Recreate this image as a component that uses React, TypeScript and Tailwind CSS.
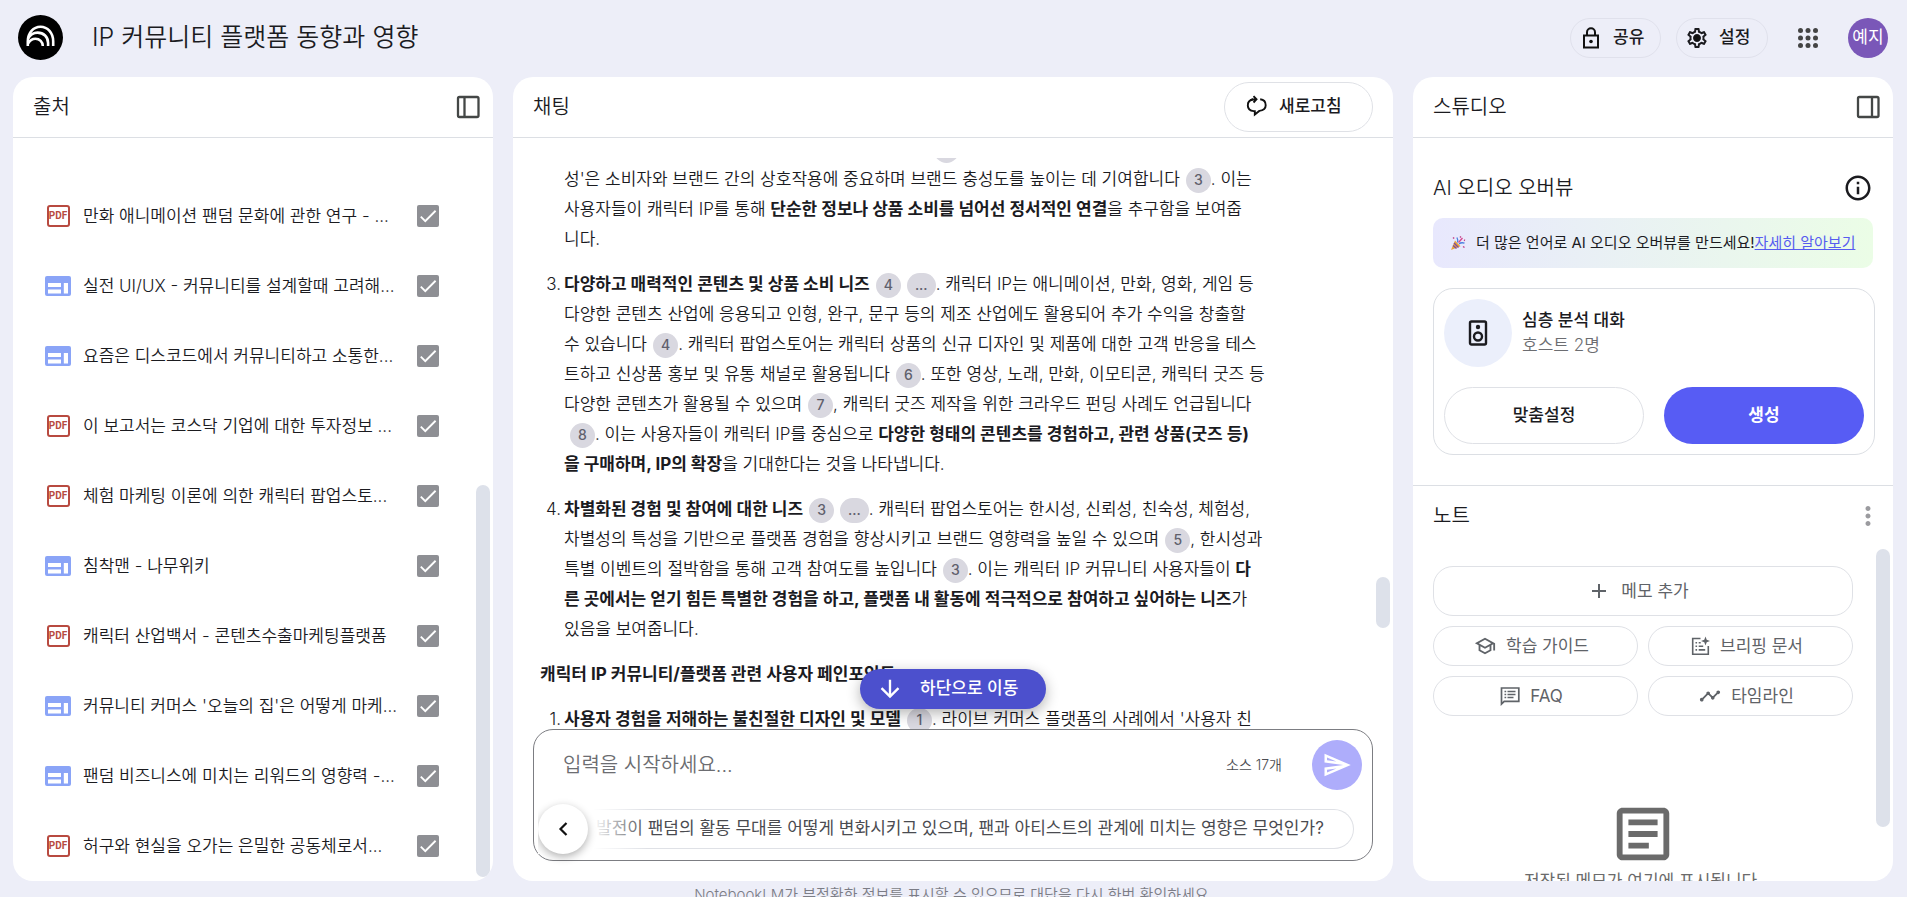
import React from 'react';
import {
  MdAdd,
  MdArrowDownward,
  MdCheck,
  MdMoreVert,
  MdOutlineArticle,
  MdOutlineInfo,
  MdOutlineSchool,
  MdOutlineSend,
  MdOutlineSettings,
  MdTimeline,
} from 'react-icons/md';

type SourceKind = 'pdf' | 'web';

interface Source {
  kind: SourceKind;
  title: string;
}

const sources: Source[] = [
  { kind: 'pdf', title: '만화 애니메이션 팬덤 문화에 관한 연구 - ...' },
  { kind: 'web', title: '실전 UI/UX - 커뮤니티를 설계할때 고려해...' },
  { kind: 'web', title: '요즘은 디스코드에서 커뮤니티하고 소통한...' },
  { kind: 'pdf', title: '이 보고서는 코스닥 기업에 대한 투자정보 ...' },
  { kind: 'pdf', title: '체험 마케팅 이론에 의한 캐릭터 팝업스토...' },
  { kind: 'web', title: '침착맨 - 나무위키' },
  { kind: 'pdf', title: '캐릭터 산업백서 - 콘텐츠수출마케팅플랫폼' },
  { kind: 'web', title: "커뮤니티 커머스 '오늘의 집'은 어떻게 마케..." },
  { kind: 'web', title: '팬덤 비즈니스에 미치는 리워드의 영향력 -...' },
  { kind: 'pdf', title: '허구와 현실을 오가는 은밀한 공동체로서...' },
];

const Logo = () => (
  <svg viewBox="0 0 45 45" className="size-[45px] shrink-0" aria-hidden="true">
    <circle cx="22.5" cy="22.5" r="22.5" fill="#000" />
    <g fill="none" stroke="#fff" strokeWidth="2.6">
      <path d="M9.8 31v-4.5C9.8 18 15.4 11.8 22.5 11.8S35.2 18 35.2 26.500V31" />
      <path d="M10 23.500c2.300-4 5.800-5.900 9.600-5.900 6 0 10.500 4.400 10.500 10.400v3" />
      <path d="M10.200 28.200c1.800-2.900 4.200-4.400 7.200-4.400 4.300 0 7.400 3.200 7.400 7.200" />
    </g>
  </svg>
);

const LockIcon = () => (
  <svg viewBox="0 0 24 24" className="size-6" fill="none" stroke="#111" strokeWidth="2" aria-hidden="true">
    <rect x="5" y="9.500" width="14" height="12" />
    <path d="M8 9.500V6.200a4 4 0 0 1 8 0v3.300" />
    <circle cx="12" cy="15.500" r="1.800" fill="#111" stroke="none" />
  </svg>
);

const SettingsIcon = () => (
  <span className="relative flex size-6 items-center justify-center">
    <MdOutlineSettings className="size-6" />
    <span className="absolute size-1.5 rounded-full bg-[#111]" />
  </span>
);

const AppsIcon = () => (
  <svg viewBox="0 0 20 20" className="size-5" fill="#444" aria-hidden="true">
    {[2.5, 10, 17.5].map((cy) => [2.5, 10, 17.5].map((cx) => <circle key={`${cx}-${cy}`} cx={cx} cy={cy} r="2.500" />))}
  </svg>
);

const PanelIcon = ({ side }: { side: 'left' | 'right' }) => (
  <svg viewBox="0 0 24 24" className="size-6" fill="none" stroke="#444746" strokeWidth="2.300" aria-hidden="true">
    <rect x="2" y="2" width="20.500" height="20" rx="1.500" />
    <path d={side === 'left' ? 'M8.500 2v20' : 'M16 2v20'} />
  </svg>
);

const RefreshIcon = () => (
  <svg viewBox="0 0 24 24" className="size-6" fill="none" stroke="#111" strokeWidth="1.900" aria-hidden="true">
    <path d="M8 4.300C5 5 2.800 7.200 2.800 10.200c0 3.300 2.500 5.600 6 5.900h1v3.500l4.500-3.700c3.800-.5 6.400-2.600 6.400-5.700 0-3.300-2.400-5.500-5.500-5.900" />
    <path d="M5.500 5.400c1.300-.8 2.700-1.100 4-1.100h1.500M8.500 1.200l3 3.100-3 3.200" />
  </svg>
);

const WebIcon = () => (
  <svg viewBox="0 0 26 20" className="h-5 w-[26px]" aria-hidden="true">
    <rect width="26" height="20" rx="2" fill="#8aa4f7" />
    <path d="M3 7h13v4H3zM3 13.500h13v4H3zM18.800 7H23v10.500h-4.200z" fill="#fff" />
  </svg>
);

const PdfIcon = () => (
  <span className="flex h-[22px] w-[23px] items-center justify-center rounded-[3px] border-2 border-[#b84a40] font-[Roboto] text-[10px] leading-none font-bold text-[#b84a40]">
    PDF
  </span>
);

const SpeakerIcon = () => (
  <svg viewBox="0 0 20 26" className="h-[26px] w-5" fill="none" stroke="#1b1b1f" strokeWidth="2.400" aria-hidden="true">
    <rect x="2" y="1.500" width="16" height="23" rx="1.500" />
    <circle cx="10" cy="16.500" r="4" />
    <circle cx="10" cy="7" r="2.200" fill="#1b1b1f" stroke="none" />
  </svg>
);

const BriefingIcon = () => (
  <svg viewBox="0 0 20 20" className="size-5" fill="none" stroke="#5f6368" strokeWidth="1.600" aria-hidden="true">
    <path d="M10.500 2.500H2.700v15.800h15.600V10" />
    <path d="M5.500 6.800h1.600M5.500 10.300h1.600M5.500 13.900h1.600M8.700 6.800h2M8.700 10.300h4.500M8.700 13.900h6.500" />
    <path d="M15.500.5l1.200 3.300L20 5l-3.300 1.200-1.200 3.300-1.200-3.300L11 5l3.300-1.200z" fill="#5f6368" stroke="none" />
  </svg>
);

const FaqIcon = () => (
  <svg viewBox="0 0 20 20" className="size-5" fill="none" stroke="#5f6368" strokeWidth="1.700" aria-hidden="true">
    <path d="M1.500 18V2h17.300v13.300H4.200z" />
    <path d="M4.500 5.500h1.700M4.500 8.500h1.700M4.500 11.500h1.700M7.500 5.500h8M7.500 8.500h8M7.500 11.500h6" />
  </svg>
);

const PartyIcon = () => (
  <svg viewBox="0 0 16 16" className="size-4 shrink-0" aria-hidden="true">
    <path d="M1 15L5 5.500l5.500 5.700z" fill="#e8a33d" />
    <path d="M3 10.500l3.500 3M4 8l4.500 4.500" stroke="#7b4a9e" strokeWidth="1.300" />
    <path d="M7.500 7.500c.5-2 .3-3.500-.6-5M9 9c1.500-1.300 3.500-1.500 5.500-.8" stroke="#4a7fe0" strokeWidth="1.300" fill="none" />
    <path d="M8.500 7.500L12.500 3" stroke="#d8478f" strokeWidth="1.400" />
    <path d="M10 1.500l1 1M14 5l1 .5M3 2.500l1.200 1M13 11.500l1.500 1" stroke="#c0418b" strokeWidth="1.500" />
  </svg>
);

const Chip = ({ children }: { children: React.ReactNode }) => (
  <button className="ml-1.5 inline-flex h-[25px] min-w-[25px] items-center justify-center rounded-full bg-[#d9d8e0] px-2 align-middle text-sm leading-none font-medium text-[#60606c]">
    {children}
  </button>
);

const PanelHeader = ({ title, children }: { title: string; children?: React.ReactNode }) => (
  <div className="flex h-[61px] shrink-0 items-center justify-between border-b border-[#dcdfe4] pl-5">
    <h2 className="text-xl leading-7">{title}</h2>
    {children}
  </div>
);

const SourcesPanel = () => (
  <section className="flex w-[480px] shrink-0 flex-col overflow-hidden rounded-[20px] bg-white">
    <PanelHeader title="출처">
      <button className="mr-[13px]" aria-label="출처 패널 접기">
        <PanelIcon side="left" />
      </button>
    </PanelHeader>
    <div className="flex min-h-0 flex-1 pr-[3px]">
      <ul className="flex min-w-0 flex-1 flex-col justify-end pr-[37px] pl-8">
        {sources.map((source, i) => (
          <li key={source.title} className="flex h-[70px] shrink-0 items-center">
            <span className="flex w-[26px] justify-center">{source.kind === 'pdf' ? <PdfIcon /> : <WebIcon />}</span>
            <label htmlFor={`source-${i}`} className="ml-3 min-w-0 flex-1 overflow-hidden pt-px whitespace-nowrap">
              {source.title}
            </label>
            <span className="relative size-[22px]">
              <input
                id={`source-${i}`}
                type="checkbox"
                defaultChecked
                className="block size-[22px] appearance-none rounded-[2px] bg-[#8e8f94]"
              />
              <MdCheck className="pointer-events-none absolute inset-0 size-[22px] text-white" />
            </span>
          </li>
        ))}
      </ul>
      <div className="flex w-3.5 flex-col justify-end pb-1">
        <div className="h-[392px] rounded-full bg-[#dde1ea]" />
      </div>
    </div>
  </section>
);

const ChatPanel = () => (
  <section className="flex min-w-0 flex-1 flex-col overflow-hidden rounded-[20px] bg-white pb-5">
    <PanelHeader title="채팅">
      <button className="mr-5 flex h-[50px] w-[149px] items-center gap-2.5 rounded-full border border-[#dfe1e6] pl-5 font-medium">
        <RefreshIcon />
        새로고침
      </button>
    </PanelHeader>

    <div className="relative flex min-h-0 flex-1 pt-5 pr-[3px]">
      <div className="min-w-0 flex-1 overflow-hidden pl-[27px] leading-[30px] whitespace-nowrap">
        <ol start={2} className="-mt-6 ml-6 space-y-[15px]">
          <li>
            <span className="inline-block w-[364px]" />
            <Chip>2</Chip>
            <br />
            성'은 소비자와 브랜드 간의 상호작용에 중요하며 브랜드 충성도를 높이는 데 기여합니다<Chip>3</Chip>. 이는
            <br />
            사용자들이 캐릭터 IP를 통해 <b className="font-bold">단순한 정보나 상품 소비를 넘어선 정서적인 연결</b>을 추구함을 보여줍
            <br />
            니다.
          </li>
          <li className="relative">
            <span className="absolute right-full pr-[3px]">3.</span>
            <b className="font-bold">다양하고 매력적인 콘텐츠 및 상품 소비 니즈</b>
            <Chip>4</Chip>
            <Chip>...</Chip>. 캐릭터 IP는 애니메이션, 만화, 영화, 게임 등
            <br />
            다양한 콘텐츠 산업에 응용되고 인형, 완구, 문구 등의 제조 산업에도 활용되어 추가 수익을 창출할
            <br />
            수 있습니다<Chip>4</Chip>. 캐릭터 팝업스토어는 캐릭터 상품의 신규 디자인 및 제품에 대한 고객 반응을 테스
            <br />
            트하고 신상품 홍보 및 유통 채널로 활용됩니다<Chip>6</Chip>. 또한 영상, 노래, 만화, 이모티콘, 캐릭터 굿즈 등
            <br />
            다양한 콘텐츠가 활용될 수 있으며<Chip>7</Chip>, 캐릭터 굿즈 제작을 위한 크라우드 펀딩 사례도 언급됩니다
            <br />
            <Chip>8</Chip>. 이는 사용자들이 캐릭터 IP를 중심으로{' '}
            <b className="font-bold">
              다양한 형태의 콘텐츠를 경험하고, 관련 상품(굿즈 등)
              <br />을 구매하며, IP의 확장
            </b>
            을 기대한다는 것을 나타냅니다.
          </li>
          <li className="relative">
            <span className="absolute right-full pr-[3px]">4.</span>
            <b className="font-bold">차별화된 경험 및 참여에 대한 니즈</b>
            <Chip>3</Chip>
            <Chip>...</Chip>. 캐릭터 팝업스토어는 한시성, 신뢰성, 친숙성, 체험성,
            <br />
            차별성의 특성을 기반으로 플랫폼 경험을 향상시키고 브랜드 영향력을 높일 수 있으며<Chip>5</Chip>, 한시성과
            <br />
            특별 이벤트의 절박함을 통해 고객 참여도를 높입니다<Chip>3</Chip>. 이는 캐릭터 IP 커뮤니티 사용자들이{' '}
            <b className="font-bold">
              다
              <br />
              른 곳에서는 얻기 힘든 특별한 경험을 하고, 플랫폼 내 활동에 적극적으로 참여하고 싶어하는 니즈
            </b>
            가
            <br />
            있음을 보여줍니다.
          </li>
        </ol>
        <h3 className="my-[15px] font-bold">캐릭터 IP 커뮤니티/플랫폼 관련 사용자 페인포인트</h3>
        <ol className="ml-6">
          <li className="relative">
            <span className="absolute right-full pr-[3px]">1.</span>
            <b className="font-bold">사용자 경험을 저해하는 불친절한 디자인 및 모델</b>
            <Chip>1</Chip>. 라이브 커머스 플랫폼의 사례에서 '사용자 친
          </li>
        </ol>
      </div>
      <div className="flex w-3.5 flex-col justify-end pb-[101px]">
        <div className="h-[51px] rounded-full bg-[#dde1ea]" />
      </div>
      <button className="absolute bottom-5 left-1/2 flex h-10 w-[186px] -translate-x-1/2 items-center gap-4 rounded-full bg-[#4c50cd] pl-4 font-medium text-white shadow-[0_4px_14px_rgba(0,0,0,0.3)]">
        <MdArrowDownward className="size-7" />
        하단으로 이동
      </button>
    </div>

    <form className="mx-5 flex h-[132px] shrink-0 flex-col rounded-[20px] border border-[#7c7d82]">
      <div className="flex items-center pt-2.5 pr-2.5 pl-[29px]">
        <input
          aria-label="질문 입력"
          placeholder="입력을 시작하세요..."
          className="min-w-0 flex-1 text-xl outline-none placeholder:text-[#6c6d71]"
        />
        <span className="mr-[30px] text-sm text-[#4c4d52]">소스 17개</span>
        <button type="button" aria-label="보내기" className="flex size-[50px] items-center justify-center rounded-full bg-[#aeadfb] text-white">
          <MdOutlineSend className="size-[30px]" />
        </button>
      </div>
      <div className="relative mt-3.5 mr-[18px] ml-1 h-[50px] overflow-x-clip">
        <button
          type="button"
          className="mt-[5px] flex h-10 w-full items-center rounded-r-full border-y border-r border-[#dfe1e6] pl-[58px] font-normal whitespace-nowrap text-[#4a4b50]"
        >
          발전이 팬덤의 활동 무대를 어떻게 변화시키고 있으며, 팬과 아티스트의 관계에 미치는 영향은 무엇인가?
        </button>
        <div className="absolute inset-y-0 left-0 w-[110px] bg-linear-to-r from-white from-50% to-transparent" />
        <button
          type="button"
          aria-label="이전 질문"
          className="absolute top-0 left-0 flex size-[50px] items-center justify-center rounded-full bg-white shadow-[0_3px_8px_rgba(0,0,0,0.3)]"
        >
          <svg viewBox="0 0 12 16" className="h-4 w-3" fill="none" stroke="#111" strokeWidth="2.200" aria-hidden="true">
            <path d="M9.500 2L3.500 8l6 6" />
          </svg>
        </button>
      </div>
    </form>
  </section>
);

const noteActions = [
  { label: '학습 가이드', icon: <MdOutlineSchool className="size-[22px]" /> },
  { label: '브리핑 문서', icon: <BriefingIcon /> },
  { label: 'FAQ', icon: <FaqIcon /> },
  { label: '타임라인', icon: <MdTimeline className="size-[22px]" /> },
];

const StudioPanel = () => (
  <section className="flex w-[480px] shrink-0 flex-col overflow-hidden rounded-[20px] bg-white">
    <PanelHeader title="스튜디오">
      <button className="mr-[13px]" aria-label="스튜디오 패널 접기">
        <PanelIcon side="right" />
      </button>
    </PanelHeader>

    <div className="border-b border-[#dcdfe4] pt-[35px] pr-[18px] pb-[30px] pl-5">
      <div className="mr-0.5 flex items-center justify-between">
        <h3 className="text-xl leading-[30px]">AI 오디오 오버뷰</h3>
        <button aria-label="정보">
          <MdOutlineInfo className="size-[30px] text-[#1b1b1f]" />
        </button>
      </div>
      <div className="mt-[15px] mr-0.5 flex h-[50px] items-center rounded-[10px] bg-linear-to-r from-[#e8e8fd] to-[#ebfde6] pl-[17px] text-[15px] font-normal whitespace-nowrap">
        <PartyIcon />
        <span className="ml-2.5">더 많은 언어로 AI 오디오 오버뷰를 만드세요!</span>
        <a href="#" className="text-[#575cf0] underline">
          자세히 알아보기
        </a>
      </div>
      <div className="mt-5 rounded-[20px] border border-[#dcdfe4] p-2.5">
        <div className="flex items-center gap-2.5">
          <div className="flex size-[68px] items-center justify-center rounded-full bg-[#ebeffb]">
            <SpeakerIcon />
          </div>
          <div className="leading-[25px]">
            <p className="font-medium">심층 분석 대화</p>
            <p className="text-[#6c6d71]">호스트 2명</p>
          </div>
        </div>
        <div className="mt-5 grid grid-cols-2 gap-5">
          <button className="h-[57px] rounded-full border border-[#dfe1e6] font-medium">맞춤설정</button>
          <button className="h-[57px] rounded-full bg-[#575cf4] font-bold text-white">생성</button>
        </div>
      </div>
    </div>

    <div className="flex h-[60px] shrink-0 items-center justify-between pl-5">
      <h3 className="text-xl leading-7">노트</h3>
      <button className="mr-2.5" aria-label="노트 더보기">
        <MdMoreVert className="size-[30px] text-[#9b9b9f]" />
      </button>
    </div>

    <div className="flex min-h-0 flex-1 pr-[3px] pl-5">
      <div className="mr-[23px] flex min-w-0 flex-1 flex-col overflow-hidden pt-5 font-normal text-[#5f6368]">
        <button className="flex h-[50px] shrink-0 items-center justify-center gap-2.5 rounded-[20px] border border-[#dfe1e6] pr-2.5">
          <MdAdd className="size-6" />
          <span className="pt-0.5">메모 추가</span>
        </button>
        <div className="mt-2.5 grid grid-cols-2 gap-2.5">
          {noteActions.map(({ label, icon }) => (
            <button key={label} className="flex h-10 items-center justify-center gap-2.5 rounded-[20px] border border-[#dfe1e6] pr-2">
              {icon}
              <span className="pt-0.5">{label}</span>
            </button>
          ))}
        </div>
        <div className="mt-[83px] flex flex-col items-center text-[#6b6b6b]">
          <MdOutlineArticle className="size-[70px] shrink-0" />
          <p className="leading-6">저장된 메모가 여기에 표시됩니다.</p>
        </div>
      </div>
      <div className="w-3.5 pt-[3px]">
        <div className="h-[278px] rounded-full bg-[#dde1ea]" />
      </div>
    </div>
  </section>
);

const App = () => (
  <div className="flex h-screen flex-col overflow-hidden bg-[#edeef8] font-[Inter,'Noto_Sans_CJK_KR',sans-serif] text-[17px] font-[350] text-[#1b1b1f]">
    <header className="flex h-[77px] shrink-0 items-center pr-[19px] pb-0.5 pl-[18px]">
      <Logo />
      <h1 className="ml-[29px] flex-1 text-[25px]">IP 커뮤니티 플랫폼 동향과 영향</h1>
      <button className="flex h-10 w-[91px] items-center gap-2.5 rounded-full border border-[#e0e1ec] pl-2 font-medium">
        <LockIcon />
        공유
      </button>
      <button className="ml-[15px] flex h-10 w-[92px] items-center gap-2.5 rounded-full border border-[#e0e1ec] pl-2 font-medium">
        <SettingsIcon />
        설정
      </button>
      <button className="ml-[30px]" aria-label="앱">
        <AppsIcon />
      </button>
      <button className="ml-[30px] size-10 rounded-full bg-[#7a57b8] font-normal text-white">예지</button>
    </header>

    <main className="flex min-h-0 flex-1 gap-5 pr-3.5 pl-[13px]">
      <SourcesPanel />
      <ChatPanel />
      <StudioPanel />
    </main>

    <footer className="h-4 shrink-0 pt-1 text-center text-[15px] leading-5 text-[#7c7d86]">
      NotebookLM가 부정확한 정보를 표시할 수 있으므로 대답을 다시 한번 확인하세요.
    </footer>
  </div>
);

export default App;
